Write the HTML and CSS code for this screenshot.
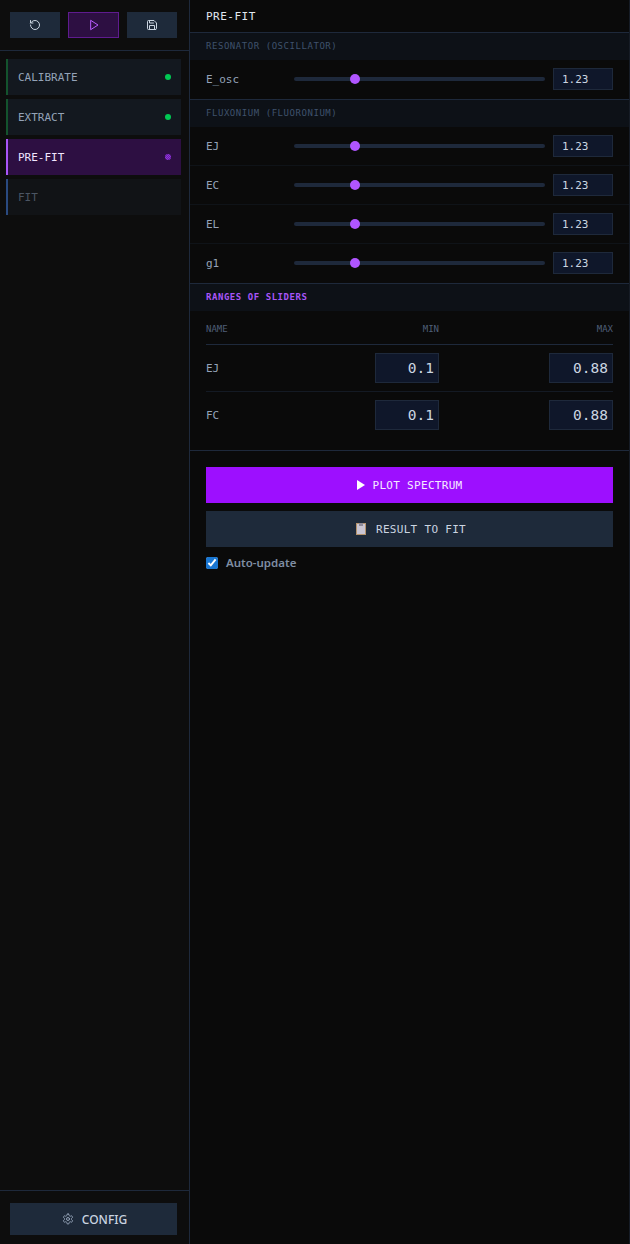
FILE: index.html
```html
<!DOCTYPE html>
<html lang="en">
<head>
<meta charset="utf-8">
<title>Pre-fit</title>
<link rel="stylesheet" href="styles.css">
</head>
<body>
<div class="app">
  <aside class="sidebar">
    <div class="toolbar">
      <button class="tool"><svg class="ico" viewBox="0 0 24 24"><path d="M3 12a9 9 0 1 0 9-9 9.75 9.75 0 0 0-6.74 2.74L3 8"/><path d="M3 3v5h5"/></svg></button>
      <button class="tool tool-active"><svg class="ico" viewBox="0 0 24 24"><path d="M6 3l14 9-14 9z"/></svg></button>
      <button class="tool"><svg class="ico" viewBox="0 0 24 24"><path d="M19 21H5a2 2 0 0 1-2-2V5a2 2 0 0 1 2-2h11l5 5v11a2 2 0 0 1-2 2z"/><path d="M17 21v-8H7v8"/><path d="M7 3v5h8"/></svg></button>
    </div>
    <nav class="nav">
      <div class="step step-done"><span>CALIBRATE</span><i class="dot"></i></div>
      <div class="step step-done"><span>EXTRACT</span><i class="dot"></i></div>
      <div class="step step-current"><span>PRE-FIT</span><i class="dot"></i></div>
      <div class="step step-idle"><span>FIT</span></div>
    </nav>
    <div class="side-foot">
      <button class="config"><svg class="ico ico-gear" viewBox="0 0 24 24"><path d="M12.22 2h-.44a2 2 0 0 0-2 2v.18a2 2 0 0 1-1 1.73l-.43.25a2 2 0 0 1-2 0l-.15-.08a2 2 0 0 0-2.730.73l-.22.38a2 2 0 0 0 .73 2.730l.15.1a2 2 0 0 1 1 1.720v.51a2 2 0 0 1-1 1.740l-.15.09a2 2 0 0 0-.73 2.730l.22.38a2 2 0 0 0 2.730.73l.15-.08a2 2 0 0 1 2 0l.43.25a2 2 0 0 1 1 1.730V20a2 2 0 0 0 2 2h.44a2 2 0 0 0 2-2v-.18a2 2 0 0 1 1-1.730l.43-.25a2 2 0 0 1 2 0l.15.08a2 2 0 0 0 2.730-.73l.22-.39a2 2 0 0 0-.73-2.730l-.15-.08a2 2 0 0 1-1-1.740v-.5a2 2 0 0 1 1-1.740l.15-.09a2 2 0 0 0 .73-2.730l-.22-.38a2 2 0 0 0-2.730-.73l-.15.08a2 2 0 0 1-2 0l-.43-.25a2 2 0 0 1-1-1.730V4a2 2 0 0 0-2-2z"/><circle cx="12" cy="12" r="3"/></svg><span>CONFIG</span></button>
    </div>
  </aside>
  <main class="main">
    <header class="title">PRE-FIT</header>
    <section class="group">
      <h2 class="group-head">RESONATOR (OSCILLATOR)</h2>
      <div class="param"><label>E_osc</label><div class="slider"><b class="knob"></b></div><div class="val">1.23</div></div>
    </section>
    <section class="group">
      <h2 class="group-head">FLUXONIUM (FLUORONIUM)</h2>
      <div class="param"><label>EJ</label><div class="slider"><b class="knob"></b></div><div class="val">1.23</div></div>
      <div class="param"><label>EC</label><div class="slider"><b class="knob"></b></div><div class="val">1.23</div></div>
      <div class="param"><label>EL</label><div class="slider"><b class="knob"></b></div><div class="val">1.23</div></div>
      <div class="param"><label>g1</label><div class="slider"><b class="knob"></b></div><div class="val">1.23</div></div>
    </section>
    <section class="group ranges">
      <h2 class="group-head group-accent">RANGES OF SLIDERS</h2>
      <div class="table">
        <div class="tr th"><span>NAME</span><span class="r">MIN</span><span class="r">MAX</span></div>
        <div class="tr"><span>EJ</span><div class="num">0.1</div><div class="num">0.88</div></div>
        <div class="tr"><span>FC</span><div class="num">0.1</div><div class="num">0.88</div></div>
      </div>
    </section>
    <section class="actions">
      <button class="btn btn-primary"><svg class="play" viewBox="0 0 9 10" preserveAspectRatio="none"><path d="M0 0l9 5-9 5z"/></svg><span>PLOT SPECTRUM</span></button>
      <button class="btn btn-second"><svg class="clip" viewBox="0 0 10 12"><rect width="10" height="12" fill="#b5936c"/><rect x="1" y="1" width="8" height="10" fill="#c9c5d3"/><rect x="3" y="0" width="4" height="3" fill="#8d8a99"/></svg><span>RESULT TO FIT</span></button>
      <label class="check"><input type="checkbox" checked><span>Auto-update</span></label>
    </section>
  </main>
</div>
</body>
</html>
```
FILE: styles.css
```css
* { box-sizing: border-box; }
html, body { margin: 0; height: 100%; }
body { background: #0a0a0a; color: #cbd5e1; font-family: "DejaVu Sans Mono", monospace; font-size: 11px; overflow: hidden; }
button { font: inherit; border: 0; padding: 0; cursor: pointer; }
.app { display: flex; height: 1244px; }
.sidebar { width: 190px; flex: none; display: flex; flex-direction: column; background: #0d0d0d; border-right: 1px solid #1e293b; }
.toolbar { height: 51px; display: flex; gap: 8px; padding: 12px 12px 12px 10px; border-bottom: 1px solid #1e293b; }
.tool { flex: 1; height: 26px; background: #1e2a3a; color: #cbd5e1; display: flex; align-items: center; justify-content: center; }
.tool-active { background: #2d0f42; border: 1px solid #5f1b8f; color: #b95cff; }
.ico { width: 12px; height: 12px; fill: none; stroke: currentColor; stroke-width: 2; stroke-linecap: round; stroke-linejoin: round; }
.nav { flex: 1; display: flex; flex-direction: column; gap: 4px; padding: 8px 8px 0 6px; }
.step { height: 36px; display: flex; align-items: center; justify-content: space-between; padding: 0 10px; border-left: 2px solid; font-size: 11px; }
.step-done { background: #13181f; border-color: #14532d; color: #94a3b8; }
.step-current { background: #2d0f42; border-color: #a855f7; color: #f1e6ff; }
.step-idle { background: #111316; border-color: #2a4a80; color: #4b5563; }
.dot { width: 6px; height: 6px; border-radius: 50%; background: #00c853; }
.step-current .dot { background: repeating-conic-gradient(#8f35d9 0 25%, #6a1fa8 0 50%) 0 0 / 2px 2px; }
.side-foot { padding: 12px 12px 9px 10px; border-top: 1px solid #1e293b; }
.config { width: 100%; height: 32px; padding-left: 2px; background: #1e2a3a; color: #cbd5e1; display: flex; align-items: center; justify-content: center; gap: 8px; font-family: "Noto Sans", sans-serif; font-size: 12px; font-weight: 500; }
.ico-gear { color: #94a3b8; }
.main { flex: 1; min-width: 0; border-right: 1px solid #161c26; }
.title { height: 33px; padding: 0 16px; display: flex; align-items: center; border-bottom: 1px solid #1e293b; color: #e2e8f0; font-size: 11px; letter-spacing: .5px; }
.group { border-bottom: 1px solid #1e293b; }
.group-head { margin: 0; height: 27px; padding: 0 16px 2px; display: flex; align-items: center; background: #0d1117; color: #3f526c; font-size: 9px; font-weight: 400; letter-spacing: .55px; }
.group-accent { color: #a855f7; font-weight: 700; }
.param { height: 39px; padding: 0 16px; display: flex; align-items: center; border-bottom: 1px solid #0f1318; }
.param:last-child { border-bottom-color: transparent; }
.param label { width: 88px; flex: none; color: #94a3b8; }
.slider { flex: 1; height: 4px; background: #1e293b; border-radius: 2px; position: relative; margin-right: 8px; }
.knob { position: absolute; left: 56px; top: -3px; width: 10px; height: 10px; border-radius: 50%; background: #b055ff; }
.val { width: 60px; height: 22px; padding: 0 8px; display: flex; align-items: center; background: #0f172a; border: 1px solid #1e293b; color: #cbd5e1; }
.table { padding: 8px 16px 12px; }
.tr { display: grid; grid-template-columns: 1fr 110px 174px; align-items: center; height: 47px; border-top: 1px solid #141a24; color: #94a3b8; justify-items: end; }
.tr > :first-child { justify-self: start; }
.th { height: 25px; border-top: 0; padding-bottom: 5px; color: #4f5f78; font-size: 9px; }
.tr:nth-child(2) { border-top-color: #1e293b; }
.num { width: 64px; height: 30px; padding: 0 4px; display: flex; align-items: center; justify-content: flex-end; background: #0f172a; border: 1px solid #1e293b; color: #cbd5e1; font-size: 14.500px; }
.actions { padding: 16px 16px 0; display: flex; flex-direction: column; gap: 8px; }
.btn { height: 36px; display: flex; align-items: center; justify-content: center; gap: 8px; letter-spacing: .3px; }
.btn-primary { background: #9d0fff; color: #f5eaff; }
.btn-second { background: #1e2a3a; color: #cbd5e1; gap: 10px; padding-left: 3px; }
.play { width: 8px; height: 10px; fill: #fff; }
.clip { width: 10px; height: 12px; }
.check { display: flex; align-items: center; gap: 8px; margin-top: 0; font-family: "Noto Sans", sans-serif; font-size: 11.500px; font-weight: 600; color: #7f8ea3; }
.check input { margin: 0; width: 12px; height: 12px; accent-color: #1976d2; }
```
